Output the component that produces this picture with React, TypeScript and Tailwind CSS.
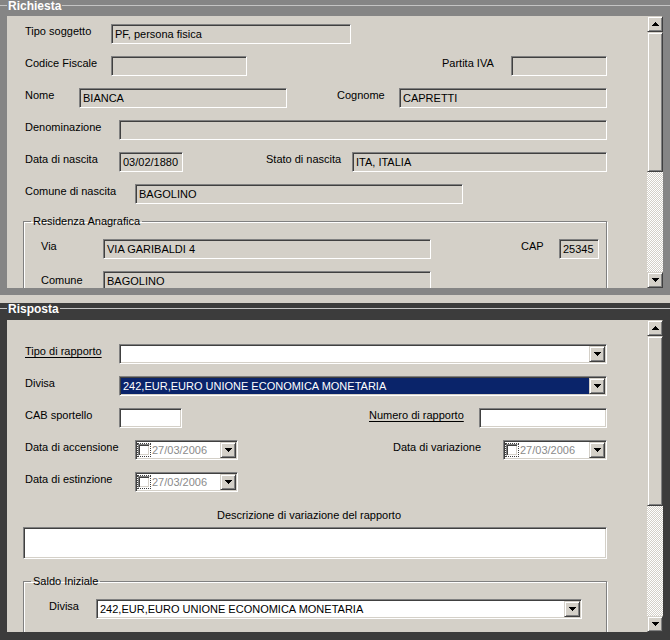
import React from "react";

const sunken =
  "border border-t-[#808080] border-l-[#808080] border-b-white border-r-white p-[1px] shadow-[inset_1px_1px_0_#404040,inset_-1px_-1px_0_#d4d0c8]";
const raised =
  "border border-t-[#d4d0c8] border-l-[#d4d0c8] border-b-[#404040] border-r-[#404040] p-[1px] shadow-[inset_1px_1px_0_#ffffff,inset_-1px_-1px_0_#808080] bg-[#d4d0c8]";

function Arrow({ up = false }: { up?: boolean }) {
  return (
    <svg width="7" height="4" viewBox="0 0 7 4" shapeRendering="crispEdges">
      <path d={up ? "M3 0h1v1h1v1h1v1h1v1H0V3h1V2h1V1h1z" : "M0 0h7v1H6v1H5v1H4v1H3V3H2V2H1V1H0z"} fill="#000" />
    </svg>
  );
}

function DropBtn({ className = "" }: { className?: string }) {
  return (
    <div className={`${raised} w-[16px] h-full shrink-0 flex items-center justify-center ${className}`}>
      <Arrow />
    </div>
  );
}

function Label({ text, className = "", underline = false }: { text: string; className?: string; underline?: boolean }) {
  return (
    <span className={`shrink-0 mt-[1px] leading-[13px] whitespace-nowrap ${underline ? "underline underline-offset-2" : ""} ${className}`}>
      {text}
    </span>
  );
}

function Field({ className = "", value = "", white = false }: { className?: string; value?: string; white?: boolean }) {
  return (
    <div
      className={`${sunken} h-[20px] shrink-0 overflow-hidden whitespace-nowrap leading-[16px] pl-[3px] ${white ? "bg-white" : "bg-[#d4d0c8]"} ${className}`}
    >
      {value}
    </div>
  );
}

function Combo({ className = "", value = "", selected = false }: { className?: string; value?: string; selected?: boolean }) {
  return (
    <div className={`${sunken} h-[20px] shrink-0 flex bg-white ${className}`}>
      <div className={`flex-1 leading-[16px] pl-[2px] whitespace-nowrap overflow-hidden ${selected ? "bg-[#0a246a] text-white" : ""}`}>
        {value}
      </div>
      <DropBtn />
    </div>
  );
}

function DatePicker({ className = "" }: { className?: string }) {
  return (
    <div className={`${sunken} h-[20px] shrink-0 flex items-center bg-white ${className}`}>
      <div className="border border-dotted border-[#404040] p-0">
        <div className="w-[12px] h-[12px] bg-white border border-t-[#808080] border-l-[#808080] border-b-white border-r-white shadow-[inset_1px_1px_0_#404040,inset_-1px_-1px_0_#d4d0c8]" />
      </div>
      <span className="flex-1 text-[#8a8a8a] leading-[16px] pl-[1px]">27/03/2006</span>
      <DropBtn />
    </div>
  );
}

function ScrollBar({ thumb }: { thumb: string }) {
  return (
    <div className="w-[16px] shrink-0 flex flex-col">
      <div className={`${raised} h-[16px] flex items-center justify-center`}>
        <Arrow up />
      </div>
      <div className={`${raised} ${thumb}`} />
      <div className="flex-1 bg-[image:repeating-conic-gradient(#ffffff_0_25%,#d4d0c8_0_50%)] bg-[length:2px_2px]" />
      <div className={`${raised} h-[16px] flex items-center justify-center`}>
        <Arrow />
      </div>
    </div>
  );
}

function Frame({
  title,
  dark = false,
  className = "",
  band,
  thumb,
  children,
}: {
  title: string;
  dark?: boolean;
  className?: string;
  band: string;
  thumb: string;
  children: React.ReactNode;
}) {
  return (
    <div className={`flex flex-col shrink-0 ${dark ? "bg-[#3c3c3c]" : "bg-[#858585]"} ${className}`}>
      <div className={`flex items-start ${band}`}>
        <div className="w-[7px] mt-[5px] border-t border-[#c4c4c4]" />
        <span className="text-white font-bold text-[12px] leading-[13px] px-[1px]">{title}</span>
        <div className="flex-1 mt-[5px] border-t border-[#c4c4c4]" />
      </div>
      <div className="flex-1 min-h-0 mx-[7px] bg-[#d4d0c8] flex">
        <div className="flex-1 min-w-0 overflow-hidden pl-[16px]">{children}</div>
        <ScrollBar thumb={thumb} />
      </div>
    </div>
  );
}

function Group({ title, className = "", children }: { title: string; className?: string; children: React.ReactNode }) {
  return (
    <fieldset className={`border border-[#808080] shadow-[inset_1px_1px_0_#ffffff,1px_1px_0_#ffffff] ${className}`}>
      <legend className="ml-[7px] px-[2px] leading-[13px]">{title}</legend>
      {children}
    </fieldset>
  );
}

export default function App() {
  return (
    <div className="w-[670px] h-[640px] overflow-hidden flex flex-col bg-[#d4d0c8] text-black text-[11px] font-['Liberation_Sans',Arial,sans-serif]">
      {/* Richiesta */}
      <Frame title="Richiesta" className="h-[295px] pb-[7px]" band="h-[16px]" thumb="h-[140px]">
        <div className="pt-[8px] flex flex-col gap-[12px]">
          <div className="flex items-start">
            <Label text="Tipo soggetto" className="w-[88px] pl-[2px]" />
            <Field className="w-[240px]" value="PF, persona fisica" />
          </div>
          <div className="flex items-start">
            <Label text="Codice Fiscale" className="w-[88px] pl-[2px]" />
            <Field className="w-[136px]" />
            <Label text="Partita IVA" className="ml-[195px] w-[69px]" />
            <Field className="w-[96px]" />
          </div>
          <div className="flex items-start">
            <Label text="Nome" className="w-[56px] pl-[2px]" />
            <Field className="w-[208px]" value="BIANCA" />
            <Label text="Cognome" className="ml-[50px] w-[62px]" />
            <Field className="w-[208px]" value="CAPRETTI" />
          </div>
          <div className="flex items-start">
            <Label text="Denominazione" className="w-[96px] pl-[2px]" />
            <Field className="w-[488px]" />
          </div>
          <div className="flex items-start">
            <Label text="Data di nascita" className="w-[96px] pl-[2px]" />
            <Field className="w-[64px]" value="03/02/1880" />
            <Label text="Stato di nascita" className="ml-[83px] w-[86px]" />
            <Field className="w-[255px]" value="ITA, ITALIA" />
          </div>
          <div className="flex items-start">
            <Label text="Comune di nascita" className="w-[112px] pl-[2px]" />
            <Field className="w-[328px]" value="BAGOLINO" />
          </div>
        </div>
        <Group title="Residenza Anagrafica" className="mt-[11px] w-[584px] h-[90px]">
          <div className="mt-[11px] pl-[17px] flex flex-col gap-[12px]">
            <div className="flex items-start">
              <Label text="Via" className="w-[62px]" />
              <Field className="w-[328px]" value="VIA GARIBALDI 4" />
              <Label text="CAP" className="ml-[90px] w-[38px]" />
              <Field className="w-[40px]" value="25345" />
            </div>
            <div className="flex items-start">
              <Label text="Comune" className="w-[62px] mt-[3px]" />
              <Field className="w-[328px]" value="BAGOLINO" />
            </div>
          </div>
        </Group>
      </Frame>

      <div className="h-[8px] shrink-0 bg-[#d4d0c8]" />

      {/* Risposta */}
      <Frame title="Risposta" dark className="h-[337px] pb-[8px]" band="h-[17px]" thumb="h-[170px]">
        <div className="pt-[24px] flex flex-col gap-[12px]">
          <div className="flex items-start">
            <Label text="Tipo di rapporto" underline className="w-[96px] pl-[2px]" />
            <Combo className="w-[488px]" />
          </div>
          <div className="flex items-start">
            <Label text="Divisa" className="w-[96px] pl-[2px]" />
            <Combo className="w-[488px]" selected value="242,EUR,EURO UNIONE ECONOMICA MONETARIA" />
          </div>
          <div className="flex items-start">
            <Label text="CAB sportello" className="w-[96px] pl-[2px]" />
            <Field className="w-[63px]" white />
            <Label text="Numero di rapporto" underline className="ml-[187px] w-[110px]" />
            <Field className="w-[128px]" white />
          </div>
          <div className="flex items-start">
            <Label text="Data di accensione" className="w-[112px] pl-[2px]" />
            <DatePicker className="w-[103px]" />
            <Label text="Data di variazione" className="ml-[155px] w-[110px]" />
            <DatePicker className="w-[104px]" />
          </div>
          <div className="flex items-start">
            <Label text="Data di estinzione" className="w-[112px] pl-[2px]" />
            <DatePicker className="w-[103px]" />
          </div>
        </div>
        <div className="mt-[17px] ml-[194px] leading-[13px]">Descrizione di variazione del rapporto</div>
        <div className={`${sunken} mt-[5px] w-[584px] h-[32px] bg-white`} />
        <Group title="Saldo Iniziale" className="mt-[16px] w-[584px] h-[70px]">
          <div className="mt-[11px] pl-[25px] flex items-start">
            <Label text="Divisa" className="w-[47px]" />
            <Combo className="w-[486px]" value="242,EUR,EURO UNIONE ECONOMICA MONETARIA" />
          </div>
        </Group>
      </Frame>
    </div>
  );
}
